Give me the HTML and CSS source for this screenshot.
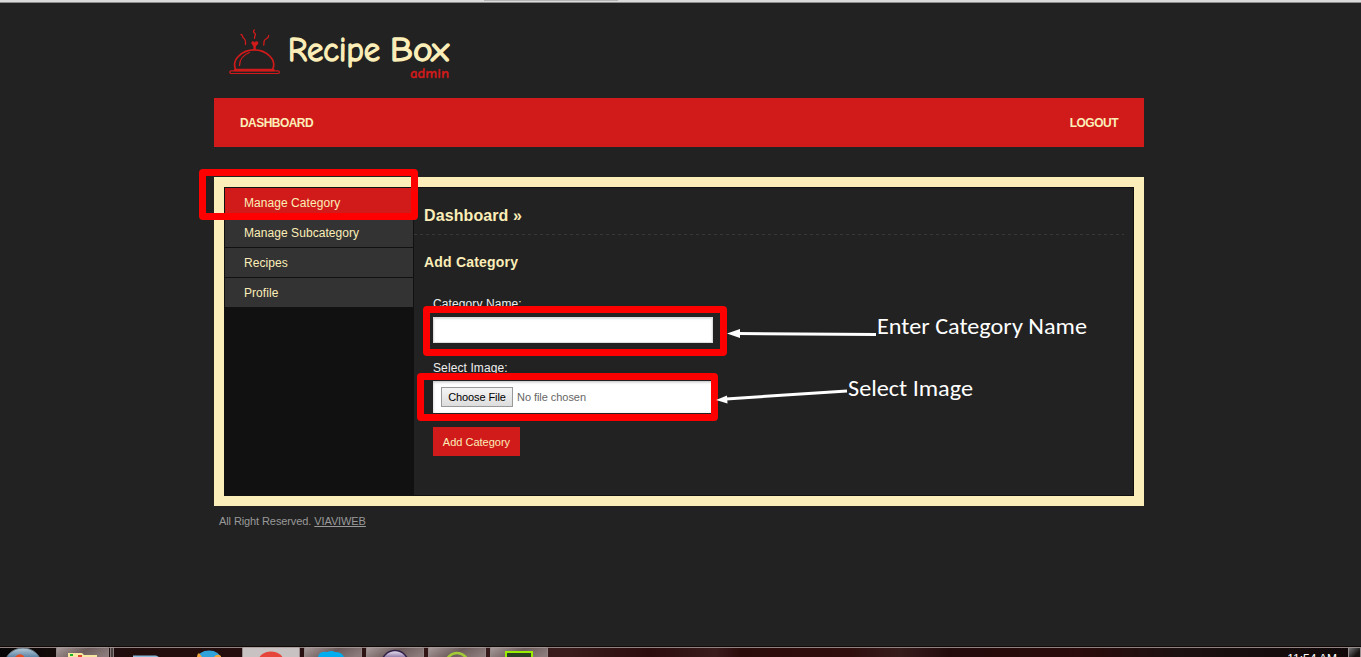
FILE: index.html
```html
<!DOCTYPE html>
<html lang="en">
<head>
<meta charset="utf-8">
<title>Recipe Box admin</title>
<link rel="stylesheet" href="styles.css">
</head>
<body>
<div class="screen">
  <div class="browser-edge"><span class="edge-shadow"></span></div>
  <div class="page">
    <header class="header">
      <svg class="logo" width="230" height="56" viewBox="0 0 230 56" role="img" aria-label="Recipe Box admin">
        <g fill="none" stroke="#d11b1b" stroke-width="1.700" stroke-linecap="round">
          <path d="M6.500 41C2.500 32 13 21.800 25.200 21.800S48 32 43.700 41"/>
          <path d="M10.500 37.500C10.500 31 14 27 20.500 24.500" stroke-width="1.300"/>
          <path d="M6 42H44.500" stroke-width="2.400"/>
          <rect x="0.800" y="42.800" width="49.500" height="2.700" rx="1.300" stroke-width="1.200"/>
          <path d="M25.600 17v4" stroke-width="2.400"/>
          <path d="M12 6.500c2 0 1 3 3 4s1.500 3 1.500 6M25.300 2c-2.500 2.500 2 3 1 5s-1 2-.7 3.300M39.700 7.500c0 4-4 2.500-4.500 5.500-.5 2 0 2-.5 4" stroke-width="1.300"/>
        </g>
        <path d="M25.600 19.500l-3-3.500c-1-3 2-3.500 3-1.500 1-2 4.500-1.500 3.500 1.500z" fill="#d11b1b"/>
        <text class="logo-name" x="59" y="33" textLength="92" lengthAdjust="spacingAndGlyphs">Recipe</text>
        <text class="logo-name" x="161" y="33" textLength="59" lengthAdjust="spacingAndGlyphs">Box</text>
        <text class="logo-sub" x="181" y="49.500" textLength="39" lengthAdjust="spacingAndGlyphs">admin</text>
      </svg>
    </header>
    <nav class="nav"><a class="nav-dash">DASHBOARD</a><a class="nav-out">LOGOUT</a></nav>
    <main class="panel">
      <aside class="sidebar">
        <a class="item active">Manage Category</a>
        <a class="item sub">Manage Subcategory</a>
        <a class="item">Recipes</a>
        <a class="item">Profile</a>
      </aside>
      <section class="content">
        <h1 class="title">Dashboard »</h1>
        <h2 class="subtitle">Add Category</h2>
        <form class="form">
          <label class="label" for="name">Category Name:</label>
          <input class="text-input" id="name" type="text">
          <span class="label label-image">Select Image:</span>
          <div class="file-input"><button class="choose" type="button"><span>Choose File</span></button><span class="file-name">No file chosen</span></div>
          <button class="submit" type="button"><span>Add Category</span></button>
        </form>
      </section>
    </main>
    <footer class="footer"><span>All Right Reserved.</span><a class="footer-link">VIAVIWEB</a></footer>
  </div>
  <div class="mark mark-menu"></div>
  <div class="mark mark-name"></div>
  <div class="mark mark-file"></div>
  <svg class="notes" width="1361" height="657" viewBox="0 0 1361 657">
    <g stroke="#fff" stroke-width="3" fill="#fff">
      <path d="M738 333.500L876 334.500"/>
      <path d="M726 399L847 391"/>
      <path d="M727 333.500l13-4.500v9zM716 400l11-4.500 .5 8z" stroke="none"/>
    </g>
    <text class="note" x="877" y="334" textLength="210" lengthAdjust="spacingAndGlyphs">Enter Category Name</text>
    <text class="note" x="848" y="396" textLength="125" lengthAdjust="spacingAndGlyphs">Select Image</text>
  </svg>
  <div class="taskbar">
    <svg class="task-icons" width="560" height="10" viewBox="0 0 560 10">
      <defs>
        <linearGradient id="btn" x2="1" y2="0.400"><stop offset="0" stop-color="#a99c9c"/><stop offset=".55" stop-color="#6d5b5b"/><stop offset="1" stop-color="#8b7b7b"/></linearGradient>
        <linearGradient id="orb" x2="0" y2="1"><stop offset="0" stop-color="#b9cbd8"/><stop offset=".35" stop-color="#47749a"/></linearGradient>
        <linearGradient id="ball" x2="0" y2="1"><stop offset="0" stop-color="#eee6f5"/><stop offset=".35" stop-color="#6b5289"/></linearGradient>
      </defs>
      <ellipse cx="23" cy="17" rx="18" ry="16" fill="url(#orb)" stroke="#63717c"/>
      <path d="M15 10q4-5 9-1v1z" fill="#e64d20"/>
      <g fill="url(#btn)" stroke="#aaa1a1" stroke-width=".7">
        <rect x="56.500" y=".5" width="52" height="14" rx="1"/><rect x="110.500" y=".5" width="3" height="14" fill="#4a4141"/>
        <rect x="242.500" y=".5" width="57" height="14" rx="1" fill="#c8c2c2"/>
        <rect x="304.500" y=".5" width="57" height="14" rx="1"/><rect x="366.500" y=".5" width="57" height="14" rx="1"/>
        <rect x="428.500" y=".5" width="57" height="14" rx="1"/><rect x="490.500" y=".5" width="57" height="14" rx="1"/>
      </g>
      <path d="M68 10V6h14l2 2h13v2z" fill="#f5e6a1"/><path d="M70 7h3v2h-3z" fill="#1db629"/><path d="M78 8h4v2h-4z" fill="#e0492f"/>
      <path d="M133 10V8.500h23l3 1.500z" fill="#8bbcdc"/>
      <ellipse cx="209" cy="12" rx="12" ry="8.500" fill="#2fa2da"/><path d="M197 10q0-3 2-4l3 4zM214 10q3-4 7-1v1z" fill="#f1a53a"/>
      <ellipse cx="271" cy="15" rx="13" ry="10.500" fill="#e6453c"/>
      <path d="M318 10q1-6 9-5 5-2 8 0 7 0 9 5z" fill="#00aeef"/>
      <circle cx="395" cy="17" r="13.500" fill="url(#ball)" stroke="#302048" stroke-width="1.500"/>
      <circle cx="457" cy="17" r="11" fill="none" stroke="#a3cb38" stroke-width="2.500"/>
      <path d="M506 12V5h26v7" fill="#294022" stroke="#9aef00" stroke-width="2"/>
    </svg>
    <span class="clock">11:54 AM</span>
    <span class="show-desktop"></span>
  </div>
</div>
</body>
</html>
```
FILE: styles.css
```css
* { box-sizing: border-box; }
body { margin: 0; font-family: "Liberation Sans", Arial, sans-serif; background: #222; }
.screen { position: relative; width: 1361px; height: 657px; overflow: hidden; background: #222; display: flex; flex-direction: column; }
.browser-edge { height: 3px; flex: none; background: #dcdcdc; border-bottom: 1px solid #8d8d8d; }
.edge-shadow { display: block; width: 134px; height: 1px; margin-left: 484px; background: #b4b4b4; }
.page { width: 930px; margin-left: 214px; flex: 1; }
.header { height: 95px; padding: 25px 0 0 15px; }
.logo { display: block; overflow: visible; }
.logo-name { font: 500 35px "Comic Neue", "Comic Sans MS", Lato, sans-serif; fill: #fbeeb8; stroke: #fbeeb8; stroke-width: 1.4px; stroke-linejoin: round; }
.logo-sub { font: bold 14px "Comic Neue", "Comic Sans MS", Lato, sans-serif; fill: #d11b1b; stroke: #d11b1b; stroke-width: .3px; }
.nav { height: 49px; padding: 0 26px; display: flex; justify-content: space-between; align-items: center; background: #d11b1b; color: #fbeeb8; font-size: 12px; font-weight: bold; }
.nav-dash { letter-spacing: -.55px; }
.nav-out { letter-spacing: -.5px; }
.panel { height: 329px; margin-top: 30px; border: 10px solid #fbeeb8; display: flex; }
.sidebar { width: 190px; padding: 1px 1px 0; background: #111; }
.item { display: block; height: 29px; margin-bottom: 1px; padding: 1px 0 0 19px; line-height: 29px; background: #333; color: #fbeeb8; font-size: 12px; letter-spacing: .06px; }
.item.active { background: #d11b1b; }
.content { flex: 1; border: 1px solid #111; border-left: 0; background: #222; color: #fbeeb8; }
.title { height: 47px; margin: 0 9px 0 0; padding: 18px 0 0 10px; font-size: 16px; line-height: 20px; letter-spacing: .1px; background: repeating-linear-gradient(90deg, #383838 0 3px, transparent 3px 6px) bottom / 100% 1px no-repeat; }
.subtitle { margin: 17px 0 0 10px; font-size: 14px; line-height: 20px; letter-spacing: .2px; }
.form { display: flex; flex-direction: column; align-items: flex-start; padding: 24px 0 0 19px; }
.label { height: 16px; font-size: 12px; line-height: 16px; color: #eee; letter-spacing: .1px; }
.text-input { width: 280px; height: 26px; margin-top: 5px; border: 1px solid #ddd; background: #fff; box-shadow: inset 0 1px 2px #ddd; }
.label-image { margin-top: 17px; }
.file-input { width: 280px; height: 32px; margin-top: 5px; padding-left: 8px; display: flex; align-items: center; gap: 4px; background: #fff; box-shadow: inset 0 1px 3px #bbb; }
.choose { width: 72px; height: 20px; padding: 0; border: 1px solid #999; background: linear-gradient(#f4f4f4, #ddd); font: 11px "Liberation Sans", sans-serif; letter-spacing: -.1px; color: #000; white-space: nowrap; }
.file-name { font-size: 11px; color: #666; letter-spacing: -.05px; }
.submit { width: 87px; height: 29px; margin-top: 14px; padding: 0; border: 0; background: #d11b1b; color: #fbeeb8; font: 11px "Liberation Sans", sans-serif; white-space: nowrap; }
.footer { padding: 8px 0 0 5px; display: flex; gap: 3px; font-size: 11px; line-height: 14px; letter-spacing: -.1px; color: #999; }
.footer-link { text-decoration: underline; }
.mark { position: absolute; border: 7px solid #f00; border-radius: 4px; }
.mark-menu { left: 199px; top: 169px; width: 219px; height: 51px; }
.mark-name { left: 423px; top: 306px; width: 304px; height: 50px; }
.mark-file { left: 417px; top: 373px; width: 301px; height: 48px; }
.notes { position: absolute; left: 0; top: 0; }
.note { font: 22px Carlito, Lato, sans-serif; fill: #fff; }
.taskbar { height: 10px; flex: none; position: relative; display: flex; justify-content: space-between; overflow: hidden; background: linear-gradient(90deg, #080606 0, #220d0d 130px, #250d0d 240px, #3b1c1c 570px, #2c0c0c 650px, #3b1c1c 715px, #2c0b0b 740px, #300e0e 850px, #371c1c 900px, #240b0b 950px, #2b0b0b 1080px, #1d1111 1180px, #100708 1361px); box-shadow: inset 0 1px #918282, 0 -1px #110808; }
.task-icons { flex: none; }
.clock { margin-left: auto; margin-right: 11px; padding-top: 5px; font-size: 12px; line-height: 14px; color: #fff; white-space: nowrap; }
.show-desktop { width: 13px; height: 14px; border: 1px solid #978f8f; background: linear-gradient(135deg, #777, #171313 60%); }
```
